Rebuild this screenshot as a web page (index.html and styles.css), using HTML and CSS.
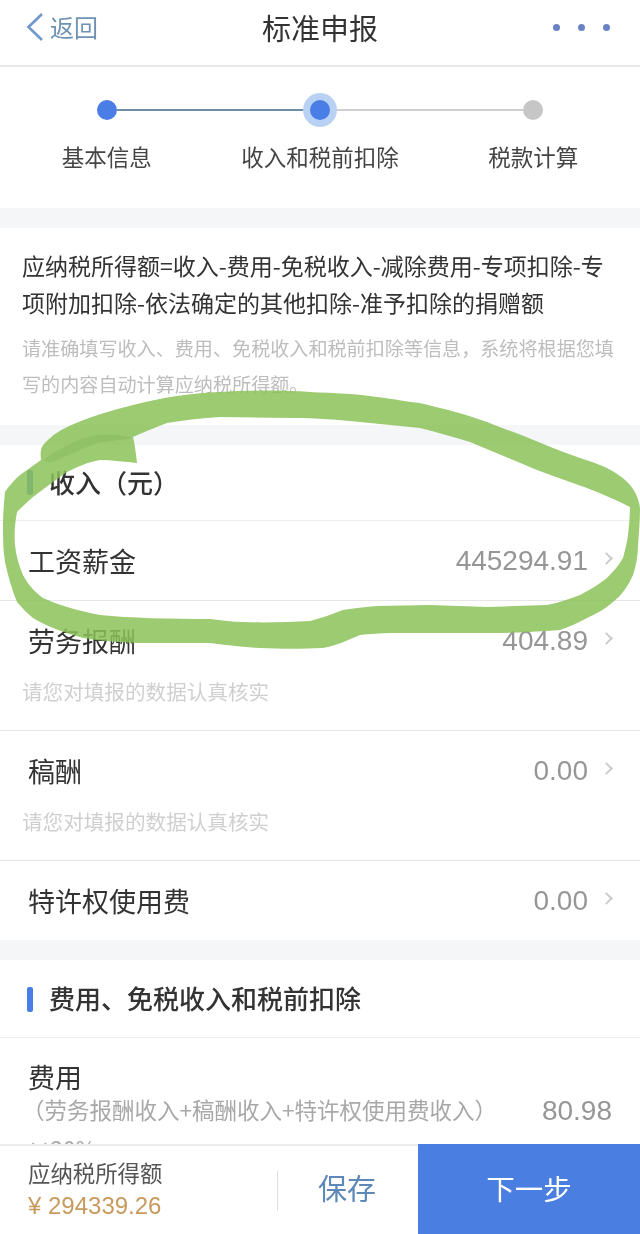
FILE: index.html
```html
<!DOCTYPE html>
<html lang="zh-CN">
<head>
<meta charset="utf-8">
<title>标准申报</title>
<link rel="stylesheet" href="styles.css">
</head>
<body>
<div class="page">
  <header class="nav">
    <div class="back">
      <svg class="back-icon" width="18" height="28" viewBox="0 0 18 28"><path d="M16 1 2.500 14 16 27" fill="none" stroke="#6f98cc" stroke-width="2.600"/></svg>
      <span>返回</span>
    </div>
    <h1 class="title">标准申报</h1>
    <div class="more"><i></i><i></i><i></i></div>
  </header>

  <section class="steps">
    <div class="track">
      <span class="dot"></span>
      <span class="line done"></span>
      <span class="dot current"></span>
      <span class="line"></span>
      <span class="dot todo"></span>
    </div>
    <div class="labels">
      <span>基本信息</span>
      <span>收入和税前扣除</span>
      <span>税款计算</span>
    </div>
  </section>

  <section class="intro">
    <p class="formula">应纳税所得额=收入-费用-免税收入-减除费用-专项扣除-专项附加扣除-依法确定的其他扣除-准予扣除的捐赠额</p>
    <p class="note">请准确填写收入、费用、免税收入和税前扣除等信息，系统将根据您填写的内容自动计算应纳税所得额。</p>
  </section>

  <section class="group">
    <h2 class="group-head">收入（元）</h2>
    <div class="row">
      <div class="row-main"><span class="name">工资薪金</span><span class="val">445294.91</span><span class="chev"></span></div>
    </div>
    <div class="row">
      <div class="row-main"><span class="name">劳务报酬</span><span class="val">404.89</span><span class="chev"></span></div>
      <p class="hint">请您对填报的数据认真核实</p>
    </div>
    <div class="row">
      <div class="row-main"><span class="name">稿酬</span><span class="val">0.00</span><span class="chev"></span></div>
      <p class="hint">请您对填报的数据认真核实</p>
    </div>
    <div class="row">
      <div class="row-main"><span class="name">特许权使用费</span><span class="val">0.00</span><span class="chev"></span></div>
    </div>
  </section>

  <section class="group fee">
    <h2 class="group-head">费用、免税收入和税前扣除</h2>
    <div class="fee-row">
      <div class="name">费用</div>
      <div class="fee-line"><span class="fee-desc">（劳务报酬收入+稿酬收入+特许权使用费收入）</span><span class="val">80.98</span></div>
      <div class="fee-desc">×20%</div>
    </div>
  </section>

  <svg class="ring" width="640" height="300" viewBox="0 380 640 300">
    <path fill="#8bc259" fill-rule="evenodd" d="M41 460C40 452 41 449 43 445C50 437 58 431 67 427C88 417 110 411 133 405C160 398 190 393 220 392C250 390 285 390 310 392C335 393 357 394 377 397C395 399 408 402 420 403C445 409 465 414 487 422C510 431 532 439 553 448C572 456 592 461 607 468C618 474 625 479 630 485C636 492 639 500 640 508C640 520 639 532 638 545C638 556 636 566 633 575C628 586 622 595 613 602C605 609 596 614 587 618C578 623 569 627 560 630C535 632 510 633 487 633L420 633L390 633C380 633 370 634 360 635C348 640 336 646 323 648C303 649 280 649 260 648C243 647 226 645 210 643L137 643C118 642 100 641 83 638C65 633 48 627 33 618C27 613 22 608 17 602C12 590 8 576 5 562C3 550 3 538 3 525C3 513 4 502 5 492C9 486 14 480 20 475C27 470 34 465 41 460ZM133 437C135 445 136 455 137 463C125 462 112 460 100 460C88 462 77 467 67 472C55 480 44 489 33 497C27 502 22 507 17 512C15 523 14 534 15 545C16 556 19 566 23 575C28 585 35 592 43 598C60 606 80 611 100 615C130 618 170 619 210 619C222 620 232 622 243 622C265 623 290 622 310 621C322 618 332 614 343 610C354 608 365 607 377 606L430 605L487 607L547 605C558 603 569 599 580 595C590 590 599 584 607 578C613 572 619 565 623 558C625 550 627 543 628 535C629 525 630 516 630 507C617 500 602 494 587 488C570 482 553 476 537 470C515 461 492 451 470 442C453 437 437 432 420 428C400 426 380 424 360 422C340 420 315 418 293 418L220 417C202 418 185 420 167 423C156 427 144 432 133 437Z"/>
    <path fill="#7fb84d" d="M43 460C50 455 57 450 67 446C78 440 88 436 100 435C112 434 124 435 133 438C122 440 108 441 97 443C84 448 70 454 57 460C52 463 47 463 43 460Z"/>
  </svg>

  <footer class="bar">
    <div class="sum">
      <div class="sum-label">应纳税所得额</div>
      <div class="sum-value">¥ 294339.26</div>
    </div>
    <div class="save"><span>保存</span></div>
    <div class="next">下一步</div>
  </footer>
</div>
</body>
</html>
```
FILE: styles.css
```css
* { box-sizing: border-box; margin: 0; padding: 0; }
html, body { width: 640px; height: 1234px; overflow: hidden; background: #fff; }
body { font-family: "Noto Sans CJK SC", "Noto Sans", sans-serif; color: #333; }
.page { position: relative; width: 640px; height: 1234px; overflow: hidden; background: #f5f6f8; filter: blur(0.5px); }

.nav { position: relative; height: 67px; background: #fff; border-bottom: 2px solid #e8e8e8; display: flex; align-items: center; justify-content: space-between; padding: 0 30px 11px 26px; }
.back { display: flex; align-items: center; gap: 6px; font-size: 24px; line-height: 34px; color: #6f92b4; }
.back-icon { display: block; }
.title { position: absolute; left: 0; right: 0; top: 8px; text-align: center; font-size: 29px; line-height: 38px; font-weight: 400; color: #333; }
.more { display: flex; gap: 18px; }
.more i { display: block; width: 7px; height: 7px; border-radius: 50%; background: #6a82c4; }

.steps { height: 141px; background: #fff; padding-top: 26px; }
.track { display: flex; align-items: center; height: 34px; padding: 0 97px; }
.dot { flex: none; width: 20px; height: 20px; border-radius: 50%; background: #4a7ee6; }
.dot.current { box-shadow: 0 0 0 7px #b9d2f3; z-index: 1; }
.dot.todo { background: #c6c6c6; }
.line { flex: 1; height: 2px; background: #cfcfcf; }
.line.done { background: #6f8ea6; }
.labels { display: grid; grid-template-columns: repeat(3, 1fr); margin-top: 13px; text-align: center; font-size: 22.500px; line-height: 32px; color: #444; }
.labels span { white-space: nowrap; }

.intro { margin-top: 20px; height: 197px; background: #fff; padding: 19px 22px 0; }
.formula { font-size: 23px; line-height: 37px; color: #333; margin-right: -8px; }
.note { margin-top: 9px; font-size: 19.100px; line-height: 36px; color: #bdbdbd; margin-right: -4px; }

.group { margin-top: 20px; background: #fff; }
.group-head { position: relative; height: 76px; padding-left: 49px; font-size: 26px; line-height: 73px; font-weight: 500; color: #333; border-bottom: 1px solid #eeeeee; }
.fee .group-head { height: 78px; line-height: 75px; }
.group-head::before { content: ""; position: absolute; left: 27px; top: 25px; width: 6px; height: 25px; border-radius: 2px; background: #4a7ee6; }
.fee .group-head::before { top: 27px; }
.row { border-bottom: 1px solid #e6e6e6; padding: 0 28px; }
.row:last-child { border-bottom: 0; }
.row-main { display: flex; align-items: center; height: 79px; }
.name { flex: 1; font-size: 27px; line-height: 40px; color: #333; }
.val { font-family: "Liberation Sans", Arial, sans-serif; font-size: 28px; color: #969696; }
.chev { flex: none; width: 9px; height: 9px; margin: 0 1.500px 5px 13.500px; border-top: 2px solid #cccccc; border-right: 2px solid #cccccc; transform: rotate(45deg); }
.hint { height: 50px; margin-left: -6px; font-size: 20.600px; line-height: 23px; color: #cfcfcf; }

.fee-row { padding: 19px 28px 0; }
.fee-row .name { display: block; }
.fee-line { display: flex; justify-content: space-between; align-items: center; margin: -3px 0 0 -6px; height: 34px; }
.fee-line .fee-desc { margin-bottom: 4px; }
.fee-row > .fee-desc { margin-top: 4px; }
.fee-desc { font-size: 22.500px; line-height: 32px; color: #a8a8a8; white-space: nowrap; }

.ring { position: absolute; left: 0; top: 380px; display: block; opacity: 0.85; }

.bar { position: absolute; left: 0; right: 0; bottom: 0; height: 90px; background: #fff; border-top: 2px solid #ececec; display: flex; }
.sum { width: 277px; padding: 11px 0 0 28px; }
.sum-label { font-size: 22.400px; line-height: 30px; color: #555; }
.sum-value { margin-top: 4px; font-family: "Liberation Sans", Arial, sans-serif; font-size: 24px; line-height: 30px; color: #c89a5e; }
.save { flex: 1; display: flex; align-items: center; padding: 0 0 6px 41px; font-size: 29px; color: #5d88b8; position: relative; }
.save::before { content: ""; position: absolute; left: 0; top: 25px; height: 40px; width: 1px; background: #e0e0e0; }
.next { width: 222px; margin-top: -2px; padding-bottom: 4px; display: flex; align-items: center; justify-content: center; font-size: 28.500px; color: #fff; background: #4a7ee0; }
```
